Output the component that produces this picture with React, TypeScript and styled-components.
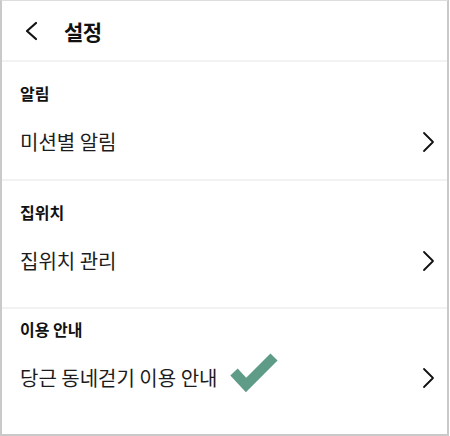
import React from "react";
import styled, { createGlobalStyle } from "styled-components";

const Global = createGlobalStyle`
  html, body { margin: 0; padding: 0; background: #ffffff; }
  body { font-family: "Noto Sans CJK KR", "Noto Sans", sans-serif; color: #111111; }
`;

const Frame = styled.div`
  box-sizing: border-box;
  width: 449px;
  height: 436px;
  border: 2px solid #c9c9c9;
  border-top: 1px solid #dddddd;
  background: #ffffff;
  display: flex;
  flex-direction: column;
  overflow: hidden;
`;

const Header = styled.header`
  height: 59px;
  display: flex;
  align-items: center;
  padding: 0 0 0 19px;
  gap: 21px;
  border-bottom: 2px solid #f2f2f2;
`;

const IconButton = styled.button`
  border: 0;
  background: none;
  padding: 0;
  width: 22px;
  height: 22px;
  display: flex;
  align-items: center;
  justify-content: center;
  color: #111111;
`;

const Title = styled.h1`
  margin: 0;
  font-size: 21px;
  font-weight: 700;
  line-height: 28px;
  letter-spacing: -0.5px;
`;

const Section = styled.section<{ $pt: number; $pb: number; $last?: boolean }>`
  padding: ${(p) => p.$pt}px 0 ${(p) => p.$pb}px;
  border-bottom: ${(p) => (p.$last ? "0" : "2px solid #f2f2f2")};
`;

const SectionTitle = styled.h2`
  margin: 0;
  padding: 0 18px;
  font-size: 16px;
  font-weight: 700;
  line-height: 22px;
  color: #111111;
`;

const Row = styled.div`
  margin-top: 15px;
  height: 46px;
  display: flex;
  align-items: center;
  padding: 0 9px 0 18px;
`;

const RowLabel = styled.span`
  font-size: 20px;
  font-weight: 400;
  line-height: 26px;
  color: #1c1c1c;
`;

const Spacer = styled.div`
  flex: 1;
`;

const Check = styled.svg`
  margin-left: 13px;
  margin-top: -8px;
`;

const Chevron = ({ dir }: { dir: "left" | "right" }) => (
  <svg width="22" height="22" viewBox="0 0 22 22" fill="none">
    <path
      d={dir === "left" ? "M15 3 L6 11 L15 19" : "M8 2 L17 11 L8 20"}
      stroke="#111111"
      strokeWidth={dir === "left" ? 2.2 : 1.8}
      strokeLinecap="round"
      strokeLinejoin="round"
    />
  </svg>
);

const sections = [
  { title: "알림", label: "미션별 알림", pt: 20, pb: 14 },
  { title: "집위치", label: "집위치 관리", pt: 20, pb: 23 },
  { title: "이용 안내", label: "당근 동네걷기 이용 안내", pt: 9, pb: 0, check: true, last: true },
];

export default function App() {
  return (
    <>
      <Global />
      <Frame>
        <Header>
          <IconButton aria-label="back">
            <Chevron dir="left" />
          </IconButton>
          <Title>설정</Title>
        </Header>
        {sections.map((s) => (
          <Section key={s.title} $pt={s.pt} $pb={s.pb} $last={s.last}>
            <SectionTitle>{s.title}</SectionTitle>
            <Row>
              <RowLabel>{s.label}</RowLabel>
              {s.check && (
                <Check width="50" height="42" viewBox="0 0 50 42">
                  <path d="M4 19 L16 32 L44 4" stroke="#5f9c87" strokeWidth="10" fill="none" strokeLinejoin="miter" />
                </Check>
              )}
              <Spacer />
              <Chevron dir="right" />
            </Row>
          </Section>
        ))}
      </Frame>
    </>
  );
}
